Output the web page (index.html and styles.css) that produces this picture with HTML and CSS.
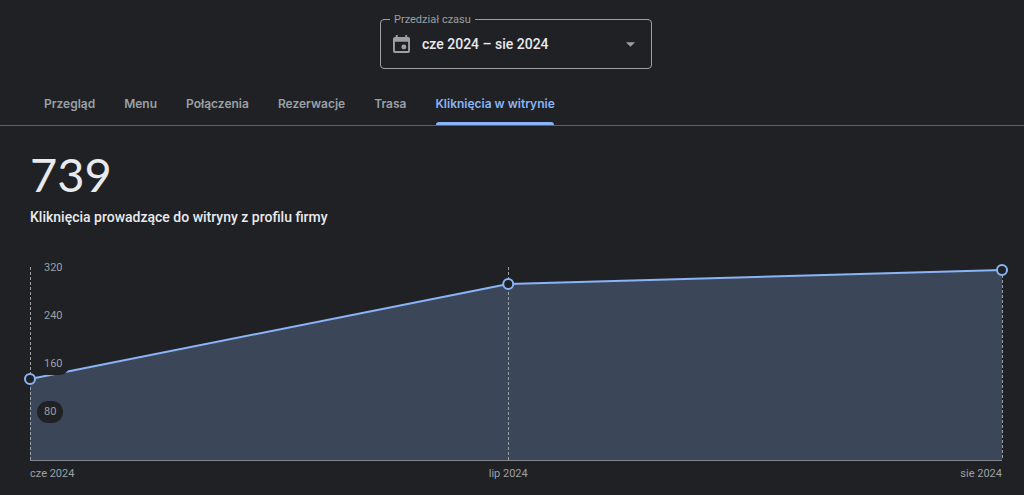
FILE: index.html
```html
<!DOCTYPE html>
<html lang="pl">
<head>
<meta charset="utf-8">
<meta name="viewport" content="width=device-width, initial-scale=1">
<title>Kliknięcia w witrynie</title>
<link rel="stylesheet" href="styles.css">
</head>
<body>
<header class="toolbar">
  <fieldset class="range">
    <legend class="range-legend"><label for="range">Przedział czasu</label></legend>
    <div class="range-body">
      <svg class="range-icon" viewBox="0 0 18 20" aria-hidden="true">
        <path fill-rule="evenodd" d="M3 0h2v2h8V0h2v2h1a2 2 0 0 1 2 2v13a2 2 0 0 1-2 2H2a2 2 0 0 1-2-2V4a2 2 0 0 1 2-2h1zM2 7v10h14V7z"/>
        <rect x="9" y="10" width="5" height="5" rx="2"/>
      </svg>
      <select class="range-select" id="range">
        <option>cze 2024 – sie 2024</option>
      </select>
      <svg class="range-arrow" viewBox="0 0 10 5" aria-hidden="true"><path d="M0 0h10L5 5z"/></svg>
    </div>
  </fieldset>
</header>
<nav class="tabs">
  <a class="tab" href="#overview">Przegląd</a>
  <a class="tab" href="#menu">Menu</a>
  <a class="tab" href="#calls">Połączenia</a>
  <a class="tab" href="#bookings">Rezerwacje</a>
  <a class="tab" href="#directions">Trasa</a>
  <a class="tab tab-active" href="#clicks" aria-current="page">Kliknięcia w witrynie</a>
</nav>
<main class="report">
  <h1 class="total">739</h1>
  <p class="caption">Kliknięcia prowadzące do witryny z profilu firmy</p>
  <section class="chart">
    <div class="plot">
      <svg class="graph" aria-hidden="true">
        <svg width="100%" height="100%" viewBox="0 0 972 193" preserveAspectRatio="none">
          <path class="area" d="M0 112L478 17L972 3V193H0z"/>
        </svg>
        <line class="guide" x1="0" y1="0" x2="0" y2="100%"/>
        <line class="guide" x1="49.200%" y1="0" x2="49.200%" y2="100%"/>
        <line class="guide" x1="100%" y1="3" x2="100%" y2="100%"/>
        <line class="axis" x1="0" y1="100%" x2="100%" y2="100%"/>
        <line class="series" x1="0" y1="112" x2="49.200%" y2="17"/>
        <line class="series" x1="49.200%" y1="17" x2="100%" y2="3"/>
      </svg>
      <ol class="scale">
        <li class="tick">320</li>
        <li class="tick">240</li>
        <li class="tick">160</li>
        <li class="tick">80</li>
      </ol>
      <svg class="graph" aria-hidden="true">
        <circle class="point" cx="0" cy="112" r="5"/>
        <circle class="point" cx="49.200%" cy="17" r="5"/>
        <circle class="point" cx="100%" cy="3" r="5"/>
      </svg>
    </div>
    <div class="months"><span>cze 2024</span><span class="month-middle">lip 2024</span><span class="month-last">sie 2024</span></div>
  </section>
</main>
</body>
</html>
```

FILE: styles.css
```css
* { box-sizing: border-box; }

body {
  margin: 0;
  background: #202124;
  color: #e8eaed;
  font-family: Roboto, "Liberation Sans", sans-serif;
}

.toolbar {
  display: flex;
  justify-content: center;
  padding: 13px 0 0 8px;
}

.range {
  width: 272px;
  margin: 0;
  padding: 0 16px 0 12px;
  border: 1px solid #9aa0a6;
  border-radius: 4px;
}

.range-legend {
  margin-left: -3px;
  padding: 0 4px;
  color: #9aa0a6;
  font-size: 11px;
  line-height: 13px;
}

.range-body {
  display: flex;
  align-items: center;
  height: 42px;
  padding-bottom: 6px;
}

.range-icon {
  width: 17px;
  height: 19px;
  fill: #9aa0a6;
}

.range-select {
  flex: 1;
  margin-left: 12px;
  padding: 0;
  border: 0;
  appearance: none;
  background: transparent;
  color: #e8eaed;
  font: 500 14px/20px Roboto, "Liberation Sans", sans-serif;
}

.range-arrow {
  width: 9px;
  height: 5px;
  fill: #9aa0a6;
}

.tabs {
  display: flex;
  gap: 29px;
  height: 57px;
  padding: 0 44px;
  border-bottom: 1px solid #5f6368;
}

.tab {
  display: flex;
  align-items: center;
  padding-top: 14px;
  color: #9aa0a6;
  font: 600 12px/16px Inter, "Liberation Sans", sans-serif;
  text-decoration: none;
}

.tab-active {
  position: relative;
  color: #8ab4f8;
}

.tab-active::after {
  content: "";
  position: absolute;
  right: 1px;
  bottom: 0;
  left: 1px;
  height: 3px;
  border-radius: 3px 3px 0 0;
  background: #8ab4f8;
}

.report { padding: 18px 22px 0 30px; }

.total {
  margin: 0;
  font: 400 47px/60px Lato, "Liberation Sans", sans-serif;
}

.caption {
  margin: 3px 0 0;
  font-size: 14px;
  font-weight: 500;
  line-height: 20px;
}

.chart { margin-top: 40px; }

.plot {
  position: relative;
  height: 193px;
}

.graph {
  position: absolute;
  inset: 0;
  width: 100%;
  height: 100%;
  overflow: visible;
}

.area { fill: #3c4659; }

.guide {
  stroke: #9aa0a6;
  stroke-dasharray: 3 2;
  shape-rendering: crispEdges;
}

.axis {
  stroke: #80868b;
  shape-rendering: crispEdges;
}

.series {
  stroke: #8ab4f8;
  stroke-width: 2;
}

.point {
  fill: #202124;
  stroke: #8ab4f8;
  stroke-width: 2;
}

.scale {
  position: absolute;
  top: -10px;
  left: 7px;
  display: flex;
  flex-direction: column;
  align-items: flex-start;
  gap: 26px;
  margin: 0;
  padding: 0;
  list-style: none;
}

.tick {
  padding: 0 7px;
  border-radius: 11px;
  background: #202124;
  color: #9aa0a6;
  font-size: 11px;
  line-height: 22px;
}

/* The middle column is centred on the second data point. */
.months {
  display: grid;
  grid-template-columns: 24.6% 49.2% 1fr;
  padding-top: 6px;
  color: #9aa0a6;
  font-size: 11px;
  line-height: 16px;
}

.month-middle { text-align: center; }

.month-last { text-align: right; }
```
